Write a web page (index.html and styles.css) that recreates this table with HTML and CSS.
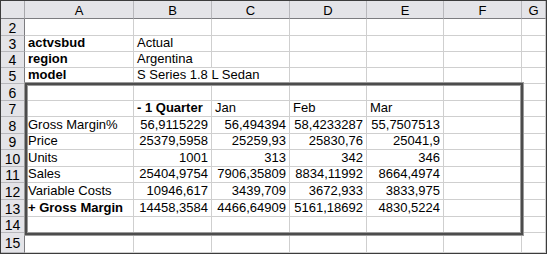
FILE: index.html
```html
<!DOCTYPE html>
<html>
<head>
<meta charset="utf-8">
<link rel="stylesheet" href="styles.css">
</head>
<body>
<div class="sheet">
  <div class="grid">
    <div class="corner"></div>
    <div class="ch">A</div><div class="ch">B</div><div class="ch">C</div><div class="ch">D</div><div class="ch">E</div><div class="ch">F</div><div class="ch">G</div>

    <div class="rh">2</div>
    <div class="c"></div><div class="c"></div><div class="c"></div><div class="c"></div><div class="c"></div><div class="c"></div><div class="c"></div>

    <div class="rh">3</div>
    <div class="c b">actvsbud</div><div class="c">Actual</div><div class="c"></div><div class="c"></div><div class="c"></div><div class="c"></div><div class="c"></div>

    <div class="rh">4</div>
    <div class="c b">region</div><div class="c">Argentina</div><div class="c"></div><div class="c"></div><div class="c"></div><div class="c"></div><div class="c"></div>

    <div class="rh">5</div>
    <div class="c b">model</div><div class="c nr">S Series 1.8 L Sedan</div><div class="c"></div><div class="c"></div><div class="c"></div><div class="c"></div><div class="c"></div>

    <div class="rh">6</div>
    <div class="c"></div><div class="c"></div><div class="c"></div><div class="c"></div><div class="c"></div><div class="c"></div><div class="c"></div>

    <div class="rh">7</div>
    <div class="c"></div><div class="c b">- 1 Quarter</div><div class="c">Jan</div><div class="c">Feb</div><div class="c">Mar</div><div class="c"></div><div class="c"></div>

    <div class="rh">8</div>
    <div class="c">Gross Margin%</div><div class="c n">56,9115229</div><div class="c n">56,494394</div><div class="c n">58,4233287</div><div class="c n">55,7507513</div><div class="c"></div><div class="c"></div>

    <div class="rh">9</div>
    <div class="c">Price</div><div class="c n">25379,5958</div><div class="c n">25259,93</div><div class="c n">25830,76</div><div class="c n">25041,9</div><div class="c"></div><div class="c"></div>

    <div class="rh">10</div>
    <div class="c">Units</div><div class="c n">1001</div><div class="c n">313</div><div class="c n">342</div><div class="c n">346</div><div class="c"></div><div class="c"></div>

    <div class="rh">11</div>
    <div class="c">Sales</div><div class="c n">25404,9754</div><div class="c n">7906,35809</div><div class="c n">8834,11992</div><div class="c n">8664,4974</div><div class="c"></div><div class="c"></div>

    <div class="rh">12</div>
    <div class="c">Variable Costs</div><div class="c n">10946,617</div><div class="c n">3439,709</div><div class="c n">3672,933</div><div class="c n">3833,975</div><div class="c"></div><div class="c"></div>

    <div class="rh">13</div>
    <div class="c b">+ Gross Margin</div><div class="c n">14458,3584</div><div class="c n">4466,64909</div><div class="c n">5161,18692</div><div class="c n">4830,5224</div><div class="c"></div><div class="c"></div>

    <div class="rh">14</div>
    <div class="c"></div><div class="c"></div><div class="c"></div><div class="c"></div><div class="c"></div><div class="c"></div><div class="c"></div>

    <div class="rh">15</div>
    <div class="c"></div><div class="c"></div><div class="c"></div><div class="c"></div><div class="c"></div><div class="c"></div><div class="c"></div>
  </div>
  <div class="box"></div>
</div>
</body>
</html>
```

FILE: styles.css
```css
html, body {
  margin: 0;
  padding: 0;
  background: #ffffff;
}

.sheet {
  position: relative;
  width: 547px;
  height: 254px;
  box-sizing: border-box;
  border: 1px solid #3c3c3c;
  overflow: hidden;
  font-family: "Liberation Sans", Arial, sans-serif;
  font-size: 13px;
  color: #000;
}

.grid {
  display: grid;
  grid-template-columns: 24px 109px 78px 78px 77px 77px 78px 1fr;
  grid-template-rows: 18px 17px 16px 16px 16px 17px 16px 17px 16px 17px 16px 17px 17px 16px 1fr;
  height: 100%;
}

.corner,
.ch,
.rh {
  background: #e4e4e8;
  box-sizing: border-box;
  border-right: 1px solid #a8a8ac;
  border-bottom: 1px solid #a8a8ac;
  display: flex;
  align-items: center;
  justify-content: center;
  line-height: 1;
}

.ch {
  border-right-color: #b8b8bc;
  border-bottom: 1px solid #7c7c80;
  padding-top: 1px;
}

.corner {
  border-bottom: 1px solid #7c7c80;
}

.rh {
  border-right: 1px solid #7c7c80;
  border-bottom-color: #b8b8bc;
  font-size: 14px;
  padding-top: 1px;
}

.c {
  box-sizing: border-box;
  border-right: 1px solid #cfcfcf;
  border-bottom: 1px solid #cfcfcf;
  display: flex;
  align-items: flex-end;
  padding: 0 2px 1px 3px;
  white-space: nowrap;
  line-height: 15px;
  overflow: visible;
}

.c.n {
  justify-content: flex-end;
  padding-right: 3px;
}

.c.b {
  font-weight: bold;
}

.c.nr {
  border-right-color: transparent;
}

.box {
  position: absolute;
  left: 24px;
  top: 82px;
  width: 498px;
  height: 152px;
  box-sizing: border-box;
  border: 2px solid #4c4c4c;
  box-shadow: 0 0 0 1px #9a9a9a, inset 0 0 0 1px #9a9a9a;
  pointer-events: none;
}
```
